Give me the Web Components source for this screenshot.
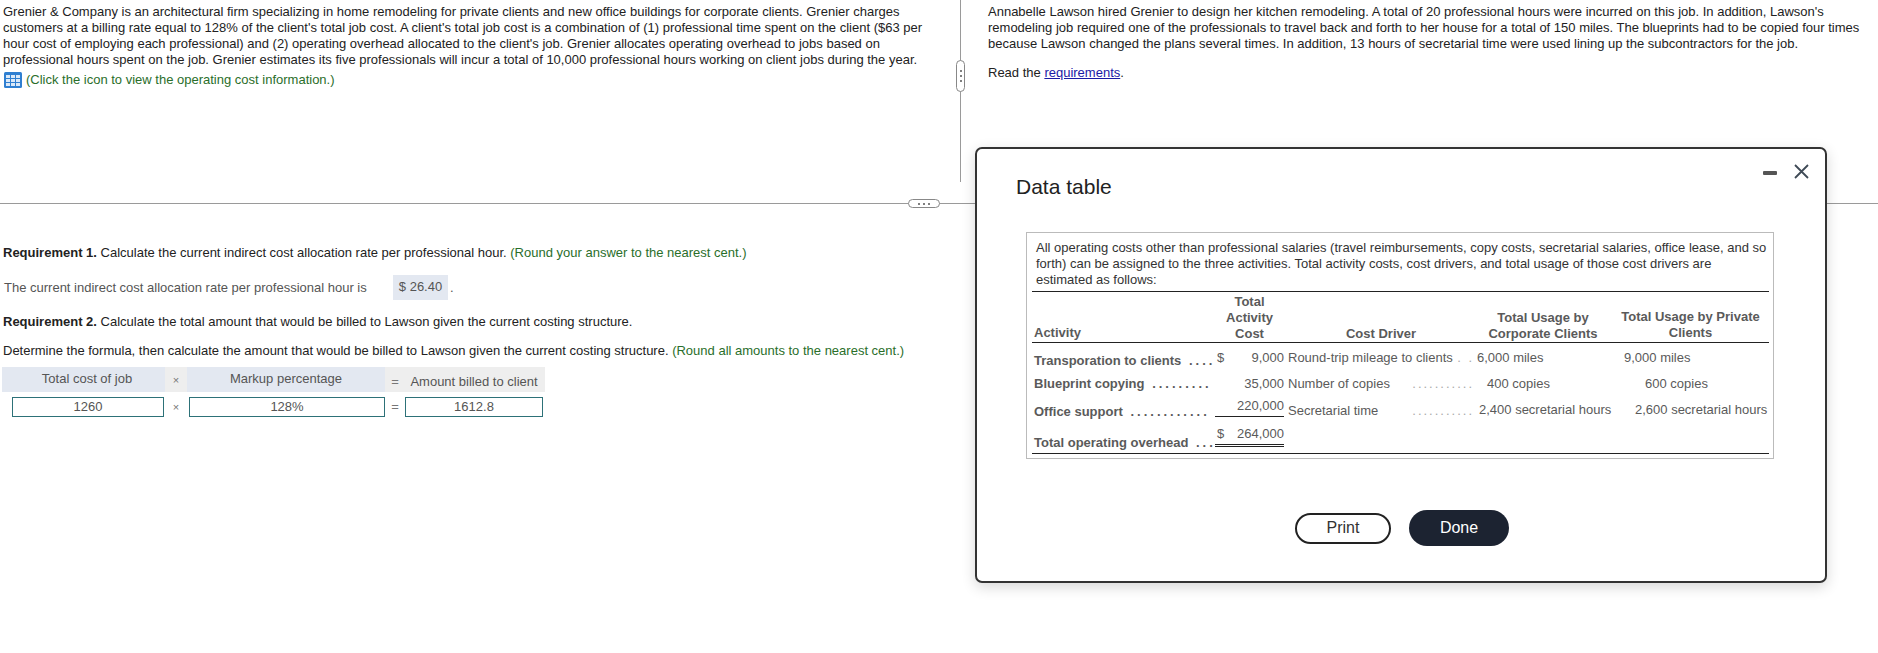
<!DOCTYPE html>
<html lang="en">
<head>
<meta charset="utf-8">
<title>Data table</title>
<style>
html,body{margin:0;padding:0;background:#fff}
body{font:13px/16px "Liberation Sans",Arial,sans-serif;color:#222}
</style>
</head>
<body>
<x-app>
  <x-pane slot="left" style="--pl:3px;--pt:4px">
    <x-p>Grenier &amp; Company is an architectural firm specializing in home remodeling for private clients and new office buildings for corporate clients. Grenier charges<br>customers at a billing rate equal to 128% of the client's total job cost. A client's total job cost is a combination of (1) professional time spent on the client ($63 per<br>hour cost of employing each professional) and (2) operating overhead allocated to the client's job. Grenier allocates operating overhead to jobs based on<br>professional hours spent on the job. Grenier estimates its five professionals will incur a total of 10,000 professional hours working on client jobs during the year.</x-p>
    <x-iconline>(Click the icon to view the operating cost information.)</x-iconline>
  </x-pane>
  <x-pane slot="right" style="--pl:27px;--pt:4px">
    <x-p>Annabelle Lawson hired Grenier to design her kitchen remodeling. A total of 20 professional hours were incurred on this job. In addition, Lawson's<br>remodeling job required one of the professionals to travel back and forth to her house for a total of 150 miles. The blueprints had to be copied four times<br>because Lawson changed the plans several times. In addition, 13 hours of secretarial time were used lining up the subcontractors for the job.</x-p>
    <x-p style="--mt:13px">Read the <x-link>requirements</x-link>.</x-p>
  </x-pane>
  <x-answers slot="bottom">
    <x-p style="--mt:41px"><x-b>Requirement 1.</x-b> Calculate the current indirect cost allocation rate per professional hour. <x-note>(Round your answer to the nearest cent.)</x-note></x-p>
    <x-rate>$ 26.40</x-rate>
    <x-p style="--mt:14px"><x-b>Requirement 2.</x-b> Calculate the total amount that would be billed to Lawson given the current costing structure.</x-p>
    <x-p style="--mt:13px">Determine the formula, then calculate the amount that would be billed to Lawson given the current costing structure. <x-note>(Round all amounts to the nearest cent.)</x-note></x-p>
    <x-formula></x-formula>
  </x-answers>
  <x-modal slot="modal"></x-modal>
</x-app>
<script>
function def(name, html){
  const tpl=document.createElement('template');
  tpl.innerHTML=html;
  customElements.define(name,class extends HTMLElement{
    constructor(){super();this.attachShadow({mode:'open'}).appendChild(tpl.content.cloneNode(true));}
  });
}

def('x-app',`<style>
:host{display:grid;grid-template-columns:960px 1px 1fr;grid-template-rows:182px 21px 1px 1fr;width:1878px;height:653px;position:relative;overflow:hidden}
.l{grid-area:1/1/3/2}.r{grid-area:1/3/3/4}
.v{grid-area:1/2/2/3;background:#9a9a9a}
.h{grid-area:3/1/4/4;background:#9a9a9a}
.b{grid-area:4/1/5/4}
.vh{position:absolute;left:956px;top:60px;width:7px;height:30px;border:1px solid #888;border-radius:5px;background:#fff;display:flex;flex-direction:column;align-items:center;justify-content:center;gap:3px}
.hh{position:absolute;left:908px;top:199px;width:30px;height:7px;border:1px solid #888;border-radius:5px;background:#fff;display:flex;align-items:center;justify-content:center;gap:3px}
i{width:2px;height:2px;background:#555;border-radius:50%;display:block}
</style>
<div class="l"><slot name="left"></slot></div>
<div class="v"></div>
<div class="r"><slot name="right"></slot></div>
<div class="h"></div>
<div class="b"><slot name="bottom"></slot></div>
<div class="vh"><i></i><i></i><i></i></div>
<div class="hh"><i></i><i></i><i></i></div>
<slot name="modal"></slot>`);

def('x-pane',`<style>:host{display:block;padding:var(--pt,0) 0 0 var(--pl,0)}</style><slot></slot>`);
def('x-p',`<style>:host{display:block;margin-top:var(--mt,0);white-space:nowrap}</style><slot></slot>`);
def('x-b',`<style>:host{font-weight:700;color:#222}</style><slot></slot>`);
def('x-note',`<style>:host{color:#2a6e2a}</style><slot></slot>`);
def('x-link',`<style>:host{color:#1a1aa6;text-decoration:underline}</style><slot></slot>`);

def('x-iconline',`<style>
:host{display:flex;align-items:center;gap:4px;margin-top:4px;color:#2a6e2a;margin-left:1px;height:16px;white-space:nowrap}
svg{display:block}
</style>
<svg width="18" height="16" viewBox="0 0 18 16" aria-hidden="true">
<rect x="0" y="0" width="18" height="16" rx="1.5" fill="#2f7fd1"/>
<g fill="#dbe9f8">
<rect x="2" y="3" width="4" height="3"/><rect x="7" y="3" width="4" height="3"/><rect x="12" y="3" width="4" height="3"/>
<rect x="2" y="7" width="4" height="3"/><rect x="7" y="7" width="4" height="3"/><rect x="12" y="7" width="4" height="3"/>
<rect x="2" y="11" width="4" height="3"/><rect x="7" y="11" width="4" height="3"/><rect x="12" y="11" width="4" height="3"/>
</g></svg><span><slot></slot></span>`);

def('x-answers',`<style>:host{display:block;padding-left:3px}</style><slot></slot>`);

def('x-rate',`<style>
:host{display:flex;align-items:center;height:25px;margin-top:14px;color:#555;white-space:nowrap;padding-left:1px}
.t{width:389px}
.v{width:55px;height:25px;background:#e3e8f1;display:flex;align-items:center;justify-content:center;box-sizing:border-box;padding-bottom:2px}
.d{margin-left:2px}
</style><span class="t">The current indirect cost allocation rate per professional hour is</span><span class="v"><slot></slot></span><span class="d">.</span>`);

def('x-formula',`<style>
:host{display:grid;grid-template-columns:163px 22px 198px 20px 140px;grid-template-rows:25px 5px 20px;margin:8px 0 0 -1px;color:#555;width:543px}
.c{display:flex;align-items:center;justify-content:center;white-space:nowrap}
.a{background:#e3e8f1;padding-bottom:1px}
.a1{padding-left:7px;box-sizing:border-box}
.g{background:#eeeeee}
.gb{background:#eeeeee;padding-top:4px;box-sizing:border-box}
.sp{grid-column:1/6}
.m{font-size:11px}
.i{border:1px solid #2d7178;box-sizing:border-box;height:20px;background:#fff;line-height:16px}
.i1{margin-left:10px;width:152px}
.i2{margin-left:2px;width:196px}
.i3{width:138px}
.me{color:#777}
</style>
<div class="c a a1">Total cost of job</div>
<div class="c g m me">×</div>
<div class="c a">Markup percentage</div>
<div class="c gb me">=</div>
<div class="c gb" style="padding-right:2px">Amount billed to client</div>
<div class="sp"></div>
<div class="c i i1">1260</div>
<div class="c m me">×</div>
<div class="c i i2">128%</div>
<div class="c me">=</div>
<div class="c i i3">1612.8</div>`);

def('x-grid',`<style>
:host{display:grid;grid-template-columns:183px 69px 4px 186px 138px 157px;grid-template-rows:51px 28px 24px 23px 35px;width:737px;margin-left:5px;border-top:1px solid #222;border-bottom:1px solid #222;color:#5a5a5a;line-height:16px;white-space:nowrap;font-size:13px;box-sizing:content-box}
.h{font-weight:700;text-align:center;align-self:end;padding-bottom:1px}
.hr{border-bottom:1px solid #222;height:51px;box-sizing:border-box}
.l{font-weight:700;padding-left:2px;align-self:center;overflow:hidden}
.dots{letter-spacing:3px;margin-left:4px}
.cost{display:flex;justify-content:space-between;align-self:center}
.drv{display:flex;justify-content:space-between;align-self:center}
.light{color:#aaa;letter-spacing:2px}
.u{border-bottom:1px solid #222;height:22px;box-sizing:border-box;padding-top:3px;align-self:start}
.du{border-bottom:3px double #222;height:29px;box-sizing:border-box;padding-top:8px;align-self:start}
.ce{align-self:center}
.en{align-self:end}
.m2{margin-top:2px}
.mb{margin-bottom:-1px}
</style>
<div class="hr" style="grid-area:1/1/2/7"></div>
<div class="h" style="grid-area:1/1;text-align:left;padding-left:2px;padding-bottom:2px">Activity</div>
<div class="h" style="grid-area:1/2">Total<br>Activity<br>Cost</div>
<div class="h" style="grid-area:1/4">Cost Driver</div>
<div class="h" style="grid-area:1/5">Total Usage by<br>Corporate Clients</div>
<div class="h" style="grid-area:1/6;padding-bottom:2px">Total Usage by Private<br>Clients</div>

<div class="l" style="grid-area:2/1;margin-top:7px">Transporation to clients <span class="dots">....</span></div>
<div class="cost m2" style="grid-area:2/2"><span style="padding-left:2px">$</span><span>9,000</span></div>
<div class="drv m2" style="grid-area:2/4"><span>Round-trip mileage to clients</span><span class="light">. .</span></div>
<div class="ce m2" style="grid-area:2/5;padding-left:3px">6,000 miles</div>
<div class="ce m2" style="grid-area:2/6;padding-left:12px">9,000 miles</div>

<div class="l m2" style="grid-area:3/1">Blueprint copying <span class="dots">.........</span></div>
<div class="cost m2" style="grid-area:3/2;justify-content:flex-end"><span>35,000</span></div>
<div class="drv m2" style="grid-area:3/4"><span>Number of copies</span><span class="light">...........</span></div>
<div class="ce m2" style="grid-area:3/5;padding-left:13px">400 copies</div>
<div class="ce m2" style="grid-area:3/6;padding-left:33px">600 copies</div>

<div class="l en" style="grid-area:4/1;margin-bottom:-2px">Office support <span class="dots">............</span></div>
<div class="u" style="grid-area:4/2;text-align:right">220,000</div>
<div class="drv en mb" style="grid-area:4/4"><span>Secretarial time</span><span class="light">...........</span></div>
<div class="en" style="grid-area:4/5;padding-left:5px">2,400 secretarial hours</div>
<div class="en" style="grid-area:4/6;padding-left:23px">2,600 secretarial hours</div>

<div class="l en" style="grid-area:5/1;padding-bottom:2px">Total operating overhead <span class="dots">...</span></div>
<div class="du" style="grid-area:5/2;display:flex;justify-content:space-between"><span style="padding-left:2px">$</span><span>264,000</span></div>`);

def('x-modal',`<style>
:host{position:absolute;left:975px;top:147px;width:852px;height:436px;box-sizing:border-box;border:2px solid #333;border-radius:7px;background:#fff;box-shadow:0 4px 14px rgba(0,0,0,.16);display:block;color:#222}
.tools{position:absolute;right:16px;top:15px;display:flex;align-items:center;gap:17px}
.min{width:14px;height:4px;background:#555;border-radius:1px;margin-top:3px}
h2{margin:0;font:400 21px/24px "Liberation Sans",Arial,sans-serif;color:#222;padding:26px 0 0 39px}
.box{width:748px;height:227px;box-sizing:border-box;margin:33px 0 0 49px;border:1px solid #bbb;padding-top:7px}
.intro{padding-left:9px;line-height:16px;color:#333;white-space:nowrap;margin-bottom:3px}
.btns{display:flex;align-items:center;margin:51px 0 0 318px;font-size:16px}
button{font:inherit;border-radius:18px;box-sizing:border-box;padding:0;cursor:pointer}
.p{width:96px;height:31px;border:2px solid #222;background:#fff;color:#333}
.d{width:100px;height:36px;border:0;background:#1c2331;color:#fff;margin-left:18px}
</style>
<div class="tools"><div class="min"></div>
<svg width="15" height="15" viewBox="0 0 15 15" aria-hidden="true"><path d="M1 1L14 14M14 1L1 14" stroke="#3f4a56" stroke-width="1.8" fill="none"/></svg></div>
<h2>Data table</h2>
<div class="box">
<div class="intro">All operating costs other than professional salaries (travel reimbursements, copy costs, secretarial salaries, office lease, and so<br>forth) can be assigned to the three activities. Total activity costs, cost drivers, and total usage of those cost drivers are<br>estimated as follows:</div>
<x-grid></x-grid>
</div>
<div class="btns"><button class="p">Print</button><button class="d">Done</button></div>`);
</script>
</body>
</html>
